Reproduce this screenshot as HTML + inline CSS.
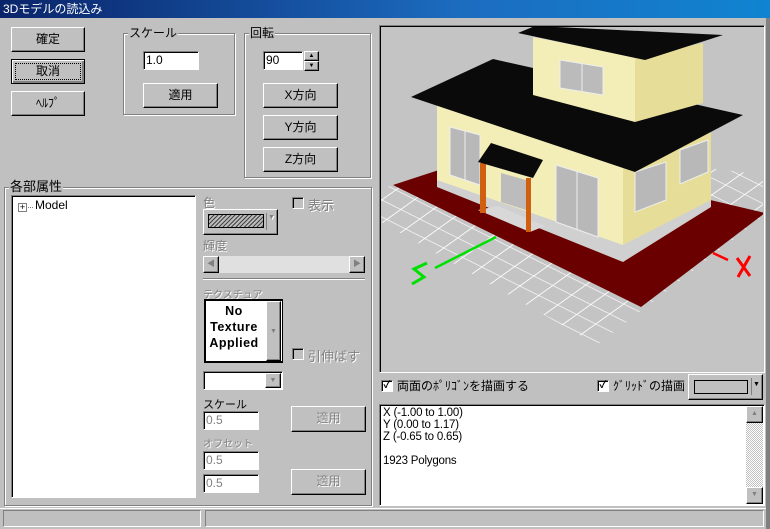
<!DOCTYPE html>
<html><head><meta charset="utf-8"><style>
*{box-sizing:border-box;margin:0;padding:0}
body{width:770px;height:529px;background:#c0c0c0;position:relative;overflow:hidden;font-family:"Liberation Sans","Noto Sans CJK JP",sans-serif;font-size:12px;color:#000}
.a{position:absolute}
.title{left:0;top:0;width:770px;height:18px;background:linear-gradient(90deg,#0a246a,#1c6cc0 60%,#1084d0);color:#fff;font-size:12px;line-height:18px;padding-left:3px}
.btn{position:absolute;background:#c0c0c0;border:1px solid;border-color:#fff #000 #000 #fff;box-shadow:inset -1px -1px 0 #808080;text-align:center;font-size:12px}
.grp{position:absolute;border:1px solid #808080;box-shadow:1px 1px 0 #fff,inset 1px 1px 0 #fff}
.gl{position:absolute;background:#c0c0c0;padding:0 1px;font-size:12px;line-height:13px}
.inp{position:absolute;background:#fff;border:1px solid;border-color:#808080 #fff #fff #808080;box-shadow:inset 1px 1px 0 #000;font-size:12px;padding-left:2px}
.cb{position:absolute;width:12px;height:12px;background:#fff;border:1px solid;border-color:#808080 #fff #fff #808080;box-shadow:inset 1px 1px 0 #000;font-size:10px;line-height:10px;text-align:center}
.gray{color:#808080;text-shadow:1px 1px 0 #fff}
</style></head><body>
<div class="a title">3Dモデルの読込み</div>
<div class="a" style="left:766px;top:18px;width:4px;height:511px;background:#808080"></div>

<div class="btn" style="left:11px;top:27px;width:74px;height:25px;line-height:22px">確定</div>
<div class="btn" style="left:11px;top:59px;width:74px;height:25px;line-height:21px;border:1px solid #000;box-shadow:inset 1px 1px 0 #fff,inset -2px -2px 0 #808080"><span style="display:block;margin:3px;border:1px dotted #000;line-height:15px">取消</span></div>
<div class="btn" style="left:11px;top:91px;width:74px;height:25px;line-height:22px">ﾍﾙﾌﾟ</div>

<div class="grp" style="left:123px;top:33px;width:112px;height:82px"></div>
<div class="gl" style="left:128px;top:27px">スケール</div>
<div class="inp" style="left:143px;top:51px;width:56px;height:19px;line-height:17px">1.0</div>
<div class="btn" style="left:143px;top:83px;width:75px;height:25px;line-height:22px">適用</div>

<div class="grp" style="left:244px;top:33px;width:127px;height:145px"></div>
<div class="gl" style="left:249px;top:27px">回転</div>
<div class="inp" style="left:263px;top:51px;width:40px;height:19px;line-height:17px">90</div>
<div class="btn" style="left:304px;top:51px;width:15px;height:10px;font-size:6px;line-height:8px">▲</div>
<div class="btn" style="left:304px;top:61px;width:15px;height:10px;font-size:6px;line-height:8px">▼</div>
<div class="btn" style="left:263px;top:83px;width:75px;height:25px;line-height:22px">X方向</div>
<div class="btn" style="left:263px;top:115px;width:75px;height:25px;line-height:22px">Y方向</div>
<div class="btn" style="left:263px;top:147px;width:75px;height:25px;line-height:22px">Z方向</div>

<div class="grp" style="left:4px;top:187px;width:368px;height:319px"></div>
<div class="gl" style="left:9px;top:180px;font-size:13px">各部属性</div>
<div class="inp" style="left:11px;top:195px;width:185px;height:303px"></div>
<div class="a" style="left:18px;top:203px;width:9px;height:9px;border:1px solid #808080;background:#fff;font-size:9px;line-height:7px;text-align:center">+</div>
<div class="a" style="left:28px;top:207px;width:5px;border-top:1px dotted #808080"></div>
<div class="a" style="left:35px;top:198px">Model</div>

<div class="a gray" style="left:203px;top:194px">色</div>
<div class="btn" style="left:203px;top:209px;width:75px;height:26px"></div>
<div class="a" style="left:208px;top:214px;width:56px;height:14px;border:1px solid #000;background:repeating-linear-gradient(135deg,#444 0 1px,#bbb 1px 3px)"></div>
<div class="a" style="left:266px;top:213px;width:1px;height:17px;background:#808080"></div>
<div class="a gray" style="left:268px;top:214px;font-size:7px">▼</div>
<div class="cb" style="left:292px;top:197px;background:#c0c0c0"></div>
<div class="a gray" style="left:308px;top:195px;font-size:13px">表示</div>
<div class="a gray" style="left:203px;top:237px">輝度</div>
<div class="a" style="left:203px;top:256px;width:162px;height:17px;background:#e0e0e0"></div>
<div class="btn" style="left:203px;top:256px;width:16px;height:17px;font-size:8px;line-height:14px;color:#808080">◀</div>
<div class="btn" style="left:349px;top:256px;width:16px;height:17px;font-size:8px;line-height:14px;color:#808080">▶</div>
<div class="a" style="left:203px;top:278px;width:162px;height:2px;border-top:1px solid #808080;border-bottom:1px solid #fff"></div>
<div class="a gray" style="left:203px;top:286px;font-size:10px">テクスチュア</div>
<div class="a" style="left:204px;top:299px;width:79px;height:64px;background:#fff;border:2px solid #000;border-right-width:1px"></div>
<div class="a" style="left:206px;top:303px;width:56px;text-align:center;font-weight:bold;font-size:12.5px;line-height:16px;letter-spacing:.5px">No<br>Texture<br>Applied</div>
<div class="btn" style="left:266px;top:301px;width:15px;height:60px;font-size:7px;line-height:60px;color:#808080">▼</div>
<div class="cb" style="left:292px;top:348px;background:#c0c0c0"></div>
<div class="a gray" style="left:308px;top:346px;font-size:13px">引伸ばす</div>
<div class="inp" style="left:203px;top:371px;width:80px;height:19px"></div>
<div class="btn" style="left:265px;top:373px;width:16px;height:15px;font-size:7px;line-height:13px;color:#808080">▼</div>
<div class="a" style="left:203px;top:396px;font-size:11px">スケール</div>
<div class="inp" style="left:203px;top:411px;width:56px;height:19px;line-height:17px;color:#808080">0.5</div>
<div class="btn gray" style="left:291px;top:406px;width:75px;height:26px;line-height:23px">適用</div>
<div class="a gray" style="left:203px;top:435px;font-size:10px">オフセット</div>
<div class="inp" style="left:203px;top:451px;width:56px;height:19px;line-height:17px;color:#808080">0.5</div>
<div class="inp" style="left:203px;top:474px;width:56px;height:19px;line-height:17px;color:#808080">0.5</div>
<div class="btn gray" style="left:291px;top:469px;width:75px;height:26px;line-height:23px">適用</div>

<div class="a" style="left:379px;top:25px;width:386px;height:348px;border:1px solid;border-color:#808080 #fff #fff #808080;box-shadow:inset 1px 1px 0 #000"></div>
<svg class="a" style="left:0;top:0" width="770" height="529" viewBox="0 0 770 529">
<defs>
<clipPath id="v"><rect x="381" y="27" width="382" height="344"/></clipPath>
<pattern id="g" patternUnits="userSpaceOnUse" width="1" height="1" patternTransform="matrix(19,9.5,14,-10,381,200)">
<path d="M0 0H1M0 0V1" stroke="#fff" stroke-width="0.09" fill="none"/>
</pattern>
</defs>
<g clip-path="url(#v)">
<rect x="381" y="27" width="382" height="344" fill="#c4c4c4"/>
<polygon points="381,188 560,150 765,175 765,215 597,345 381,222" fill="url(#g)"/>
<polygon points="393,185 500,150 765,213 641,307" fill="#6b0000"/>
<polygon points="437,100 623,150 623,255 437,182" fill="#f3eeb8"/>
<polygon points="623,150 711,118 711,202 623,255" fill="#e6dd98"/>
<polygon points="437,180 623,245 711,200 711,207 623,262 437,187" fill="#d0d0d0"/>
<polygon points="478,210 530,232 545,226 498,206" fill="#d8d8d8"/>
<polygon points="450,127 480,135 480,185 450,175" fill="#b8b8b8" stroke="#eee"/>
<line x1="465" y1="131" x2="465" y2="180" stroke="#eee"/>
<polygon points="556,165 598,178 598,237 556,222" fill="#b8b8b8" stroke="#eee"/>
<line x1="577" y1="171" x2="577" y2="230" stroke="#eee"/>
<polygon points="635,172 666,162 666,200 635,212" fill="#b8b8b8" stroke="#eee"/>
<polygon points="680,150 708,140 708,172 680,184" fill="#b8b8b8" stroke="#eee"/>
<polygon points="501,173 526,180 526,210 501,202" fill="#bcbcbc"/>
<polygon points="411,97 493,59 743,115 635,172" fill="#0a0a0a"/>
<polygon points="533,37 635,57 635,122 533,95" fill="#f3eeb8"/>
<polygon points="635,57 703,43 703,103 635,122" fill="#e6dd98"/>
<polygon points="560,60 603,67 603,95 560,88" fill="#bbb" stroke="#eee"/>
<line x1="582" y1="64" x2="582" y2="91" stroke="#eee"/>
<polygon points="518,33 535,26 723,35 645,60" fill="#0a0a0a"/>
<rect x="480" y="163" width="6" height="50" fill="#d06010"/>
<rect x="526" y="178" width="5" height="54" fill="#d06010"/>
<polygon points="478,162 491,143 543,160 533,178" fill="#0a0a0a"/>
<line x1="496" y1="237" x2="435" y2="268" stroke="#00e000" stroke-width="2.5"/>
<polyline points="427,263 414,269 424,277 412,284" fill="none" stroke="#00e000" stroke-width="3"/>
<line x1="713" y1="253" x2="728" y2="260" stroke="#f00" stroke-width="2.5"/>
<path d="M737 258L750 276M750 256L738 277" stroke="#f00" stroke-width="3"/>
</g>
</svg>

<div class="cb" style="left:381px;top:380px;font-weight:bold">✓</div>
<div class="a" style="left:397px;top:377px;font-size:12px">両面のﾎﾟﾘｺﾞﾝを描画する</div>
<div class="cb" style="left:597px;top:380px;font-weight:bold">✓</div>
<div class="a" style="left:613px;top:377px;font-size:12px">ｸﾞﾘｯﾄﾞの描画</div>
<div class="btn" style="left:688px;top:374px;width:75px;height:26px"></div>
<div class="a" style="left:694px;top:380px;width:54px;height:14px;border:1px solid #000"></div>
<div class="a" style="left:751px;top:378px;width:1px;height:17px;background:#808080"></div>
<div class="a" style="left:753px;top:381px;font-size:7px">▼</div>

<div class="inp" style="left:379px;top:404px;width:386px;height:102px;padding:2px 0 0 3px;font-size:11.5px;line-height:12px;letter-spacing:-.2px">X (-1.00 to 1.00)<br>Y (0.00 to 1.17)<br>Z (-0.65 to 0.65)<br><br>1923 Polygons</div>
<div class="a" style="left:746px;top:406px;width:17px;height:98px;background:repeating-conic-gradient(#fff 0 25%,#c0c0c0 0 50%) 0 0/2px 2px"></div>
<div class="btn" style="left:746px;top:406px;width:17px;height:17px;font-size:7px;line-height:14px;color:#808080">▲</div>
<div class="btn" style="left:746px;top:487px;width:17px;height:17px;font-size:7px;line-height:14px;color:#808080">▼</div>

<div class="a" style="left:0;top:508px;width:766px;height:1px;background:#fff"></div>
<div class="a" style="left:3px;top:510px;width:198px;height:17px;border:1px solid;border-color:#808080 #fff #fff #808080"></div>
<div class="a" style="left:205px;top:510px;width:559px;height:17px;border:1px solid;border-color:#808080 #fff #fff #808080"></div>
</body></html>
